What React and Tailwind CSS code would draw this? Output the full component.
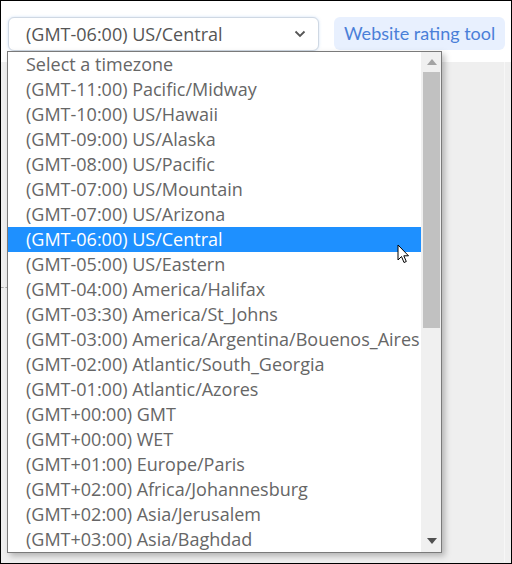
import React from 'react';

const zones = [
  'Select a timezone',
  '(GMT-11:00) Pacific/Midway',
  '(GMT-10:00) US/Hawaii',
  '(GMT-09:00) US/Alaska',
  '(GMT-08:00) US/Pacific',
  '(GMT-07:00) US/Mountain',
  '(GMT-07:00) US/Arizona',
  '(GMT-06:00) US/Central',
  '(GMT-05:00) US/Eastern',
  '(GMT-04:00) America/Halifax',
  '(GMT-03:30) America/St_Johns',
  '(GMT-03:00) America/Argentina/Bouenos_Aires',
  '(GMT-02:00) Atlantic/South_Georgia',
  '(GMT-01:00) Atlantic/Azores',
  '(GMT+00:00) GMT',
  '(GMT+00:00) WET',
  '(GMT+01:00) Europe/Paris',
  '(GMT+02:00) Africa/Johannesburg',
  '(GMT+02:00) Asia/Jerusalem',
  '(GMT+03:00) Asia/Baghdad',
];

const selected = '(GMT-06:00) US/Central';

export default function App() {
  return (
    <div className="relative w-[512px] h-[564px] border border-black bg-[#efefef] overflow-hidden font-['Open_Sans',sans-serif]">
      {/* top bar */}
      <div className="flex items-start gap-[15px] bg-white h-[61px] pl-[7px] pt-[16px]">
        <div className="flex items-center justify-between w-[311px] h-[34px] pl-[17px] pr-[12px] rounded-md border border-[#cfd8e3] bg-white shadow-[0_0_3px_rgba(120,170,230,0.35)] text-[18px] text-[#555]">
          <span>{selected}</span>
          <svg width="12" height="8" viewBox="0 0 12 8">
            <path d="M1.5 1.5 L6 6 L10.5 1.5" fill="none" stroke="#555" strokeWidth="1.8" />
          </svg>
        </div>
        <div className="h-[33px] px-[10px] rounded-md bg-[#e8f0fe] text-[#4a7fd8] text-[18px] leading-[33px] font-['Lato',sans-serif]">
          Website rating tool
        </div>
      </div>

      {/* faint background bits */}
      <div className="absolute left-0 top-[286px] w-[7px] border-t border-dashed border-[#aaa]" />
      <div className="absolute left-[503px] top-[61px] w-[1px] h-[500px] bg-[#f7f7f7]" />

      {/* open dropdown */}
      <div className="absolute left-[6px] top-[50px] w-[435px] h-[502px] border border-[#7a7a7a] bg-white flex shadow-[3px_3px_6px_rgba(0,0,0,0.25)]">
        <div className="flex-1 min-w-0">
          {zones.map((z) => (
            <div
              key={z}
              className={
                z === selected
                  ? 'h-[25px] leading-[25px] pl-[18px] text-[18px] whitespace-nowrap overflow-hidden bg-[#1e90ff] text-white'
                  : 'h-[25px] leading-[25px] pl-[18px] text-[18px] whitespace-nowrap overflow-hidden text-[#666]'
              }
            >
              {z}
            </div>
          ))}
        </div>
        <div className="w-[20px] bg-[#f0f0f0] flex flex-col items-center pl-[2px] pr-[1px]">
          <div className="h-[20px] flex items-center justify-center">
            <svg width="10" height="6" viewBox="0 0 10 6">
              <path d="M0 6 L5 0 L10 6 Z" fill="#a3a3a3" />
            </svg>
          </div>
          <div className="w-full h-[256px] bg-[#c1c1c1]" />
          <div className="flex-1" />
          <div className="h-[22px] flex items-center justify-center">
            <svg width="10" height="6" viewBox="0 0 10 6">
              <path d="M0 0 L10 0 L5 6 Z" fill="#505050" />
            </svg>
          </div>
        </div>
      </div>

      {/* mouse pointer */}
      <svg className="absolute left-[396px] top-[243px]" width="14" height="21" viewBox="0 0 14 21">
        <path
          d="M1 1 L1 16 L4.5 12.5 L7 18.5 L9.3 17.5 L6.8 11.8 L11.5 11.8 Z"
          fill="white"
          stroke="black"
          strokeWidth="1"
          strokeLinejoin="round"
        />
      </svg>
    </div>
  );
}
